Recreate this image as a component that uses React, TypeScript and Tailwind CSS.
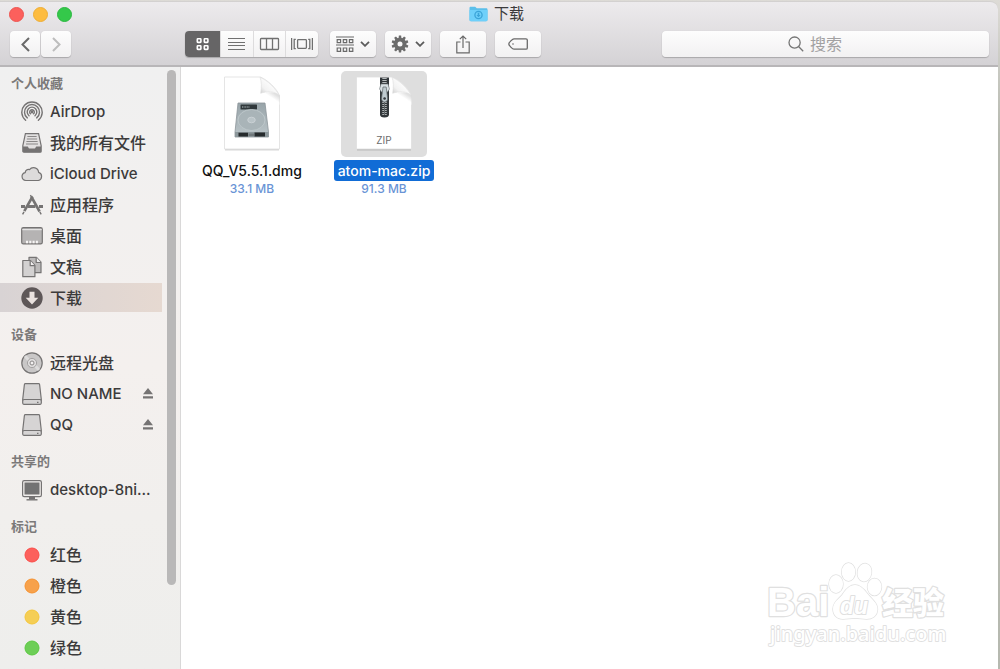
import React, { useState } from 'react';
import clsx from 'clsx';

type IconName =
  | 'airdrop' | 'allFiles' | 'cloud' | 'apps' | 'desktop' | 'documents' | 'downloads'
  | 'disc' | 'drive' | 'computer' | 'red' | 'orange' | 'yellow' | 'green';

interface SidebarItem {
  id: string;
  label: string;
  icon: IconName;
  latin?: boolean;
  ejectable?: boolean;
}

const SECTIONS: { title: string; items: SidebarItem[] }[] = [
  {
    title: '个人收藏',
    items: [
      { id: 'airdrop', label: 'AirDrop', icon: 'airdrop', latin: true },
      { id: 'all', label: '我的所有文件', icon: 'allFiles' },
      { id: 'icloud', label: 'iCloud Drive', icon: 'cloud', latin: true },
      { id: 'apps', label: '应用程序', icon: 'apps' },
      { id: 'desktop', label: '桌面', icon: 'desktop' },
      { id: 'documents', label: '文稿', icon: 'documents' },
      { id: 'downloads', label: '下载', icon: 'downloads' },
    ],
  },
  {
    title: '设备',
    items: [
      { id: 'remote', label: '远程光盘', icon: 'disc' },
      { id: 'noname', label: 'NO NAME', icon: 'drive', latin: true, ejectable: true },
      { id: 'qq', label: 'QQ', icon: 'drive', latin: true, ejectable: true },
    ],
  },
  {
    title: '共享的',
    items: [{ id: 'shared', label: 'desktop-8ni...', icon: 'computer', latin: true }],
  },
  {
    title: '标记',
    items: [
      { id: 'red', label: '红色', icon: 'red' },
      { id: 'orange', label: '橙色', icon: 'orange' },
      { id: 'yellow', label: '黄色', icon: 'yellow' },
      { id: 'green', label: '绿色', icon: 'green' },
    ],
  },
];

const FILES = [
  { name: 'QQ_V5.5.1.dmg', size: '33.1 MB', kind: 'dmg' },
  { name: 'atom-mac.zip', size: '91.3 MB', kind: 'zip' },
];

const Tag = ({ fill, stroke }: { fill: string; stroke: string }) => (
  <circle cx="11" cy="11" r="7" fill={fill} stroke={stroke} />
);

const SIDEBAR_ICONS: Record<IconName, React.ReactNode> = {
  airdrop: (
    <g fill="none" stroke="#757373" strokeWidth="1.4" strokeLinecap="round">
      <path d="M4.6 19.2a10.2 10.2 0 1 1 12.8 0" />
      <path d="M6.3 16.9a7.5 7.5 0 1 1 9.4 0" />
      <path d="M8 14.7a4.8 4.8 0 1 1 6 0" />
      <path d="M9.5 12.8a2.3 2.3 0 1 1 3 0" />
      <circle cx="11" cy="11" r="0.7" fill="#757373" />
    </g>
  ),
  allFiles: (
    <g>
      <path d="M4.4 1.6h13.2l2.6 12.2v5.4a1 1 0 0 1-1 1H2.8a1 1 0 0 1-1-1v-5.4z" fill="#e2e0e0" stroke="#757373" strokeWidth="1.2" />
      <path d="M2 14.5h4.6c.6 0 .9 2 1.7 2h5.4c.8 0 1.1-2 1.7-2H20v4.9a.8.8 0 0 1-.8.8H2.8a.8.8 0 0 1-.8-.8z" fill="#757373" />
      <path d="M6.4 4.5h9.2M5.9 7h10.2M5.4 9.500h11.200M5 12h12" stroke="#8a8888" strokeWidth="1.2" />
    </g>
  ),
  cloud: (
    <path d="M4.8 17.5a4 4 0 0 1-.6-7.9 3.3 3.3 0 0 1 4.3-3 5.1 5.1 0 0 1 9.1 2.8 4.2 4.2 0 0 1-.2 8.1z" fill="#dddbdb" stroke="#757373" strokeWidth="1.2" />
  ),
  apps: (
    <g fill="none" stroke="#757373">
      <path d="M11.6 2.500 3.300 17.200M10.2 2.500l8.400 15" strokeWidth="2.6" />
      <path d="M9.4 1.200 11 4M3 17.800 1.600 20.400M18.800 17.800l1.400 2.600" strokeWidth="1.4" />
      <path d="M0 12.600h4M6.800 12.600h7.600M18 12.600h4" strokeWidth="3" />
    </g>
  ),
  desktop: (
    <g>
      <rect x=".7" y="2.700" width="20.600" height="16.200" rx="1.600" fill="#b5b3b3" stroke="#757373" strokeWidth="1.200" />
      <path d="M1.300 4.600h19.400" stroke="#e4e2e2" strokeWidth="1.200" />
      <path d="M5 17h2M8.300 17h2M11.600 17h2M14.900 17h2" stroke="#f7f5f5" strokeWidth="2.400" />
    </g>
  ),
  documents: (
    <g fill="#d3d1d1" stroke="#757373" strokeWidth="1.200" strokeLinejoin="round">
      <path d="M8 1.300h7.500l4.500 4.900v10.500H8z" fill="#bcbaba" />
      <path d="M15.200 1.300v5.200H20" fill="#eee" />
      <path d="M1.800 4.500h7.500l4.600 5v11.200H1.800z" />
      <path d="M9.200 4.500v5.200h4.700" fill="#f2f0f0" />
    </g>
  ),
  downloads: (
    <g>
      <circle cx="11" cy="11" r="10.700" fill="#5e5758" />
      <path d="M8.500 4.800h5v6h3.800L11 17.400 4.700 10.800h3.800z" fill="#eae2df" />
    </g>
  ),
  disc: (
    <g fill="none" stroke="#757373">
      <circle cx="11" cy="11" r="10.200" fill="#c9c7c7" strokeWidth="1.200" />
      <path d="m4 4 4 4.500M18 18l-4-4.500" stroke="#dddcdc" strokeWidth="3" />
      <circle cx="11" cy="11" r="4.600" fill="#dfdddd" stroke="#a5a3a3" />
      <circle cx="11" cy="11" r="2" fill="#f2f0f0" stroke="#8a8888" />
    </g>
  ),
  drive: (
    <g stroke="#757373" strokeWidth="1.200">
      <path d="M4.400.7h13.200c.6 0 .9.3 1 .8l1.700 15v3.600c0 .7-.4 1.200-1.100 1.200H2.800c-.7 0-1.100-.5-1.100-1.200v-3.600l1.700-15c.1-.5.4-.8 1-.8z" fill="#d6d4d4" />
      <path d="M1.900 17.200c.3-.5.7-.7 1.200-.7h15.800c.5 0 .9.200 1.200.7" fill="none" />
      <path d="M16 19.300h1.500" />
    </g>
  ),
  computer: (
    <g fill="none" stroke="#757373">
      <rect x="1.600" y="1.600" width="18.800" height="16" rx="1.600" strokeWidth="1.200" />
      <rect x="4" y="4" width="14" height="11" fill="#737373" />
      <path d="M8 19h6" strokeWidth="2.400" />
      <path d="M5.500 20.800h11" strokeWidth="1.400" />
    </g>
  ),
  red: <Tag fill="#fc605c" stroke="#fb4b47" />,
  orange: <Tag fill="#f7a14b" stroke="#f6922f" />,
  yellow: <Tag fill="#f5ce55" stroke="#f5c63a" />,
  green: <Tag fill="#6dce56" stroke="#5ac840" />,
};

const Chevron = () => (
  <svg className="w-[10px] h-[6px]" viewBox="0 0 10 6" fill="none" stroke="#5c5c5c" strokeWidth="1.800">
    <path d="M1 .8 5 4.800l4-4" />
  </svg>
);

const GearIcon = () => (
  <svg className="w-[18px] h-[18px]" viewBox="0 0 18 18">
    {[0, 36, 72, 108, 144, 180, 216, 252, 288, 324].map(a => (
      <path key={a} d="M7.300 5 7.900.6h2.200L10.700 5z" fill="#6b6b6b" transform={`rotate(${a} 9 9)`} />
    ))}
    <circle cx="9" cy="9" r="4.400" fill="none" stroke="#6b6b6b" strokeWidth="3.800" />
  </svg>
);

const FolderIcon = () => (
  <svg className="w-[19px] h-[16px]" viewBox="0 0 19 16">
    <path d="M.5 2.200c0-.9.5-1.400 1.400-1.400h4.300l1.600 1.400h9.300c.9 0 1.400.5 1.400 1.400v10.200c0 .9-.5 1.400-1.400 1.400H1.900c-.9 0-1.400-.5-1.400-1.400z" fill="#5bbfea" />
    <path d="M.5 4h18v9.800c0 .9-.5 1.400-1.400 1.400H1.900c-.9 0-1.400-.5-1.400-1.400z" fill="#6fd0fa" />
    <circle cx="9.500" cy="9" r="3.600" fill="none" stroke="#3ba4d8" strokeWidth="1.300" />
    <path d="M8.700 6.800h1.600v2.100h1.300L9.500 11.200 7.400 8.900h1.300z" fill="#3ba4d8" />
  </svg>
);

const VIEWS = [
  {
    id: 'icons',
    label: '图标',
    icon: (
      <g strokeWidth="1.600">
        <rect x="5.300" y="1.800" width="3.600" height="3.600" rx=".6" />
        <rect x="12.300" y="1.800" width="3.600" height="3.600" rx=".6" />
        <rect x="5.300" y="8.800" width="3.600" height="3.600" rx=".6" />
        <rect x="12.300" y="8.800" width="3.600" height="3.600" rx=".6" />
      </g>
    ),
  },
  { id: 'list', label: '列表', icon: <path d="M2 1.500h17M2 5.500h17M2 8.500h17M2 12.500h17" strokeWidth="1.200" /> },
  {
    id: 'columns',
    label: '分栏',
    icon: (
      <g strokeWidth="1.300">
        <rect x="1.500" y="1.500" width="18" height="11" rx=".8" />
        <path d="M7.500 1.500v11M13.500 1.500v11" />
      </g>
    ),
  },
  {
    id: 'flow',
    label: 'Cover Flow',
    icon: (
      <g strokeWidth="1.300">
        <rect x="6.600" y="2.600" width="8.800" height="8.800" rx=".8" />
        <path d="M.6 1v12M21.400 1v12M4.800 2.400H3.200v9.200h1.600M17.200 2.400h1.600v9.200h-1.600" />
      </g>
    ),
  },
];

const BUTTON = 'h-[26px] flex items-center justify-center rounded-[4px] bg-linear-to-b from-[#fdfdfd] to-[#f2f1f2] shadow-[0_1px_1px_rgba(0,0,0,0.2),0_0_1px_rgba(0,0,0,0.15)]';

const FileIcon = ({ kind }: { kind: string }) => (
  <svg className="w-[86px] h-[86px]" viewBox="0 0 86 86">
    <defs>
      <linearGradient id={`fold-${kind}`} x1="0" y1="1" x2="0.7" y2="0.3">
        <stop offset="0" stopColor="#c4c4c4" />
        <stop offset="0.45" stopColor="#f2f2f2" />
        <stop offset="1" stopColor="#ffffff" />
      </linearGradient>
      <linearGradient id={`page-${kind}`} x1="0.4" y1="0.6" x2="1" y2="0">
        <stop offset="0.3" stopColor="#ffffff" />
        <stop offset="0.7" stopColor="#d4d4d4" />
      </linearGradient>
      <linearGradient id={`metal-${kind}`} x1="0" y1="0" x2="0" y2="1">
        <stop offset="0" stopColor="#98a4a9" />
        <stop offset="1" stopColor="#bcc6ca" />
      </linearGradient>
    </defs>
    <path d="M16 6.500h36c6 3 16 12 18 19v53H16z" fill="#000" opacity=".16" transform="translate(0 1)" />
    <path d="M15.500 6h36c7 3 17 12 19 19v53h-55z" fill="#fff" stroke="#dedede" strokeWidth=".8" />
    <path d="M51.500 21.500H62c4 0 7 1 8.500 3.500v9C66 27 60 24 51.500 24z" fill={`url(#page-${kind})`} opacity=".7" />
    <path d="M51 6.300c1.500 4 1.700 9 .7 16C57 20 67 20 70.500 25 67 18 59 9.500 51 6.300z" fill={`url(#fold-${kind})`} stroke="#d6d6d6" strokeWidth=".5" />
    {kind === 'dmg' ? (
      <g>
        <path d="M29 32h27l3.500 29v5H26v-5z" fill={`url(#metal-${kind})`} stroke="#8d969a" strokeWidth=".8" />
        <rect x="31.500" y="33.500" width="16.500" height="5" rx=".6" fill="#30383b" />
        <path d="M33 36h8" stroke="#8a9396" strokeWidth="1.400" strokeDasharray="1 .6" />
        <ellipse cx="42.500" cy="49" rx="13.500" ry="10.500" fill="#a9b4b8" stroke="#c2cbce" strokeWidth=".8" />
        <ellipse cx="42.500" cy="49" rx="3.800" ry="2.800" fill="#bac4c8" stroke="#cfd6d9" strokeWidth=".8" />
        <path d="M26 61h33.500v5H26z" fill="#8c979b" />
        <path d="M29.500 61.800h9.500v3.600h-9.500zM45.500 61.500H56v4H45.500z" fill="#262b2d" />
        <path d="M39.500 62.500h5.500v2.500h-5.500z" fill="#70787b" />
      </g>
    ) : (
      <g>
        <path d="M39 6.400h9v37.100c0 1.900-1.500 3-4.500 3s-4.500-1.100-4.500-3z" fill="#32373a" />
        <path d="M43.500 7v38" stroke="#b4b9ba" strokeWidth="4.400" strokeDasharray="1.100 .9" />
        <path d="M43.500 25v19" stroke="#5d6365" strokeWidth="1.200" />
        <path d="M40 13h7l1.500 5-2 3h-6l-2-3z" fill="#d8e0e3" stroke="#737b7e" strokeWidth=".6" />
        <path d="M42 16h3.200l1.400 11c.2 2.400-1 4-3 4s-3.200-1.600-3-4z" fill="#bfcbd0" stroke="#62696c" strokeWidth=".7" />
        <circle cx="43.600" cy="27.500" r="1.300" fill="#363b3e" />
        <text x="43" y="72.500" textAnchor="middle" fontFamily="Inter, sans-serif" fontSize="10" fill="#6c6c6c">ZIP</text>
      </g>
    )}
  </svg>
);

const Watermark = () => (
  <svg
    className="absolute right-[48px] bottom-[18px] w-[184px] h-[92px] pointer-events-none"
    viewBox="0 0 184 92"
    fill="#fff"
    stroke="#e0e0e0"
    strokeWidth="2.4"
    paintOrder="stroke"
    strokeLinejoin="round"
  >
    <text x="1" y="57" fontFamily="Liberation Sans, sans-serif" fontWeight="700" fontSize="40">Bai</text>
    <text x="116" y="55" fontFamily="Noto Sans CJK SC, sans-serif" fontWeight="900" fontSize="31">经验</text>
    <g strokeWidth="1.400">
      <ellipse cx="70" cy="25" rx="7" ry="9" />
      <ellipse cx="82.500" cy="13" rx="6.800" ry="9" />
      <ellipse cx="98.500" cy="13.500" rx="7" ry="9" transform="rotate(10 98.5 13.5)" />
      <ellipse cx="108.500" cy="28" rx="7" ry="8.500" />
      <path d="M89 26c5 0 9 4 13 9.500 4 5 9.500 8.500 9.500 14.500 0 7-5.500 10-11 10-4 0-7-1-11.500-1s-8 1-12 1c-6 0-10-4-10-10 0-7 6-10 9.500-14.500C80 30 84 26 89 26z" />
    </g>
    <text x="74" y="55" fontFamily="Liberation Sans, sans-serif" fontStyle="italic" fontWeight="700" fontSize="23" strokeWidth="2">du</text>
    <text x="4" y="82" fontFamily="Noto Sans, sans-serif" fontWeight="500" fontSize="20" strokeWidth="1.8">jingyan.baidu.com</text>
  </svg>
);

const TitleBar = ({ view, onView }: { view: string; onView: (v: string) => void }) => (
  <header className="shrink-0 rounded-tr-lg border-t border-t-[#d3d1d0] border-b-2 border-b-[#b8b6b8] bg-linear-to-b from-[#edebed] to-[#d4d2d5]">
    <div className="grid grid-cols-[1fr_auto_1fr] items-center h-6 pl-[9px] pr-[14px]">
      <div className="flex gap-[9px]">
        <button aria-label="关闭" className="w-[15px] h-[15px] rounded-full bg-[#fc605c] border border-[#ee5551]" />
        <button aria-label="最小化" className="w-[15px] h-[15px] rounded-full bg-[#fdbc40] border border-[#eeae35]" />
        <button aria-label="缩放" className="w-[15px] h-[15px] rounded-full bg-[#34c84a] border border-[#2bb940]" />
      </div>
      <h1 className="flex items-center gap-[6px] text-[15px] leading-5 text-[#3b3a3b]">
        <FolderIcon />
        下载
      </h1>
    </div>
    <div className="flex items-center mt-[5px] pb-2 pl-[10px] pr-[9px]">
      <div className="flex gap-px w-[175px] shrink-0">
        <button aria-label="后退" className={clsx(BUTTON, 'w-[30px]')}>
          <svg className="w-[9px] h-[15px]" viewBox="0 0 9 15" fill="none" stroke="#696969" strokeWidth="2"><path d="M8 1 1.500 7.500 8 14" /></svg>
        </button>
        <button aria-label="前进" className={clsx(BUTTON, 'w-[30px]')}>
          <svg className="w-[9px] h-[15px]" viewBox="0 0 9 15" fill="none" stroke="#bdbdbd" strokeWidth="2"><path d="m1 1 6.500 6.500L1 14" /></svg>
        </button>
      </div>
      <div className={clsx(BUTTON, 'shrink-0 w-[133px] overflow-hidden')}>
        {VIEWS.map(v => (
          <button
            key={v.id}
            aria-label={v.label}
            onClick={() => onView(v.id)}
            className={clsx(
              'h-full flex items-center justify-center border-r border-[#dddcdd] last:border-r-0',
              view === v.id ? 'w-9 bg-[#666566] text-white' : 'flex-1 text-[#707070]'
            )}
          >
            <svg className="w-[22px] h-[14px]" viewBox="0 0 22 14" fill="none" stroke="currentColor">{v.icon}</svg>
          </button>
        ))}
      </div>
      <div className="flex gap-[9px] ml-3">
        <button aria-label="排列" className={clsx(BUTTON, 'w-[46px] gap-[6px]')}>
          <svg className="w-[18px] h-[17px]" viewBox="0 0 18 17" fill="none" stroke="#696969" strokeWidth="1.2">
            <path d="M0 1h18M0 9h18" />
            <path d="M1.200 3.600h3.400v3H1.200zM7.300 3.600h3.400v3H7.300zM13.400 3.600h3.400v3h-3.400zM1.200 12h3.400v3.400H1.200zM7.300 12h3.400v3.400H7.300zM13.400 12h3.400v3.400h-3.400z" />
          </svg>
          <Chevron />
        </button>
        <button aria-label="操作" className={clsx(BUTTON, 'w-[46px] gap-[6px]')}>
          <GearIcon />
          <Chevron />
        </button>
        <button aria-label="共享" className={clsx(BUTTON, 'w-[46px]')}>
          <svg className="w-[14px] h-[19px]" viewBox="0 0 14 19" fill="none" stroke="#696969" strokeWidth="1.2">
            <path d="M4.500 7H.8v10.800h12.400V7H9.500M7 13V1.200M3.800 4.200 7 1l3.200 3.200" />
          </svg>
        </button>
        <button aria-label="标记" className={clsx(BUTTON, 'w-[46px]')}>
          <svg className="w-[20px] h-[12px]" viewBox="0 0 20 12" fill="none" stroke="#696969" strokeWidth="1.3">
            <path d="M6 .8h12c.8 0 1.300.5 1.300 1.300v7.800c0 .8-.5 1.300-1.300 1.300H6C4.500 11.200.8 7.500.8 6S4.500.8 6 .8z" />
            <circle cx="5" cy="6" r=".8" fill="#696969" stroke="none" />
          </svg>
        </button>
      </div>
      <label className={clsx(BUTTON, 'ml-auto w-[327px] min-w-0 gap-[6px]')}>
        <svg className="w-4 h-4 shrink-0" viewBox="0 0 16 16" fill="none" stroke="#757575" strokeWidth="1.3">
          <circle cx="6.600" cy="6.600" r="5.600" />
          <path d="m10.800 10.800 4.400 4.400" />
        </svg>
        <input type="search" aria-label="搜索" placeholder="搜索" className="w-[53px] bg-transparent outline-none text-base leading-5 text-[#444] placeholder:text-[#a2a1a2]" />
      </label>
    </div>
  </header>
);

const Sidebar = ({ current, onSelect }: { current: string; onSelect: (id: string) => void }) => (
  <aside className="shrink-0 flex border-r border-[#d9d8d8] bg-linear-to-b from-[#f0f0f0] via-[#f4f0ee] to-[#eeeeec]">
    <nav className="w-[162px] pt-[5px]">
      {SECTIONS.map(section => (
        <section key={section.title} className="mb-[10px]">
          <h2 className="h-6 pl-[11px] text-[13px] leading-[22px] font-bold text-[#7b7979]">{section.title}</h2>
          <ul>
            {section.items.map(item => (
              <li
                key={item.id}
                className={clsx(
                  'h-[31px] flex items-center pr-[9px] border-y border-transparent bg-clip-padding',
                  current === item.id && 'bg-linear-to-r from-[#d8d3d4] to-[#e6d9d1]'
                )}
              >
                <button onClick={() => onSelect(item.id)} className="flex-1 flex items-center gap-[7px] pl-[21px] whitespace-nowrap text-left text-[#3c3b3b]">
                  <svg className="w-[22px] h-[22px] shrink-0" viewBox="0 0 22 22">{SIDEBAR_ICONS[item.icon]}</svg>
                  <span className={clsx('leading-5 font-medium', item.latin ? 'text-[15px]' : 'text-base')}>{item.label}</span>
                </button>
                {item.ejectable && (
                  <button aria-label="推出">
                    <svg className="w-[10px] h-[11px]" viewBox="0 0 10 11" fill="#757373"><path d="M5 0l5 6.200H0zM0 8.200h10v2.200H0z" /></svg>
                  </button>
                )}
              </li>
            ))}
          </ul>
        </section>
      ))}
    </nav>
    <div className="w-[18px] pl-[5px] pt-[3px]">
      <div className="w-[9px] h-[86%] rounded-full bg-[#b9b8b8]" />
    </div>
  </aside>
);

const App: React.FC = () => {
  const [view, setView] = useState('icons');
  const [folder, setFolder] = useState('downloads');
  const [selected, setSelected] = useState('atom-mac.zip');

  return (
    <div className="h-screen flex flex-col pt-px pr-[2px] bg-linear-to-b from-[#dddbd6] to-[#b6b9b0] to-20% font-['Inter','Noto_Sans_CJK_SC',sans-serif]">
      <TitleBar view={view} onView={setView} />
      <div className="flex-1 min-h-0 flex overflow-hidden">
        <Sidebar current={folder} onSelect={setFolder} />
        <main className="relative flex-1 flex flex-wrap content-start pl-[5px] pt-1 bg-white">
          {FILES.map(file => {
            const active = selected === file.name;
            return (
              <button key={file.name} onClick={() => setSelected(file.name)} className="w-[132px] flex flex-col items-center">
                <span className={clsx('rounded-[5px]', active && 'bg-[#dedede]')}>
                  <FileIcon kind={file.kind} />
                </span>
                <span className={clsx('mt-[3px] px-1 rounded-[3px] text-sm leading-[21px] font-medium', active ? 'bg-[#116cd6] text-white' : 'text-[#111]')}>
                  {file.name}
                </span>
                <span className="text-xs leading-[15px] font-medium text-[#6a94d6]">{file.size}</span>
              </button>
            );
          })}
          <Watermark />
        </main>
      </div>
    </div>
  );
};

export default App;
